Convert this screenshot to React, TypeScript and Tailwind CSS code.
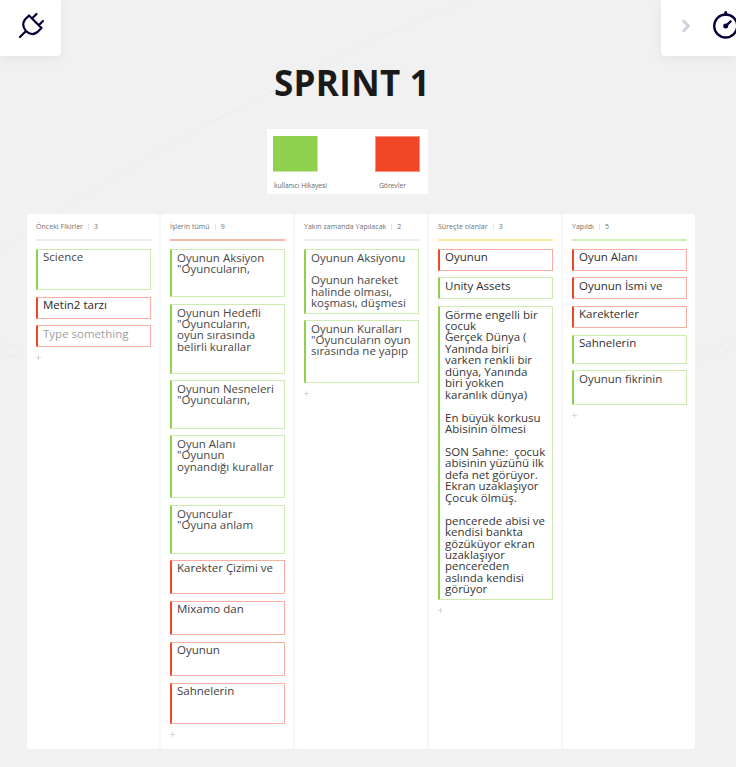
type Tone = 'green' | 'red';

interface CardData {
  tone: Tone;
  size: string;
  lines: string[];
  text?: string;
}

interface ColumnData {
  title: string;
  count: number;
  rule: string;
  cards: CardData[];
}

const columns: ColumnData[] = [
  {
    title: 'Önceki Fikirler',
    count: 3,
    rule: 'bg-[#ebebeb]',
    cards: [
      { tone: 'green', size: 'h-[41px] pt-px', lines: ['Science'] },
      { tone: 'red', size: 'mt-[7px] h-[22px] pt-px', lines: ['Metin2 tarzı'], text: 'text-[#1f1f1f]' },
      { tone: 'red', size: 'mt-[6px] h-[22px] pt-[1.5px]', lines: ['Type something'], text: 'text-[#a0a0a0]' },
    ],
  },
  {
    title: 'İşlerin tümü',
    count: 9,
    rule: 'bg-[#f9b8ab]',
    cards: [
      { tone: 'green', size: 'h-[48px] pt-[1.5px]', lines: ['Oyunun Aksiyon', '"Oyuncuların,'] },
      { tone: 'green', size: 'mt-[7px] h-[70px] pt-[1.5px]', lines: ['Oyunun Hedefli', '"Oyuncuların,', 'oyun sırasında', 'belirli kurallar'] },
      { tone: 'green', size: 'mt-[6px] h-[49px] pt-[1.5px]', lines: ['Oyunun Nesneleri', '"Oyuncuların,'] },
      { tone: 'green', size: 'mt-[6px] h-[63px] pt-[1.8px]', lines: ['Oyun Alanı', '"Oyunun', 'oynandığı kurallar'] },
      { tone: 'green', size: 'mt-[7px] h-[49px] pt-[1.5px]', lines: ['Oyuncular', '"Oyuna anlam'] },
      { tone: 'red', size: 'mt-[6px] h-[34px] pt-px', lines: ['Karekter Çizimi ve'], text: 'text-[#404040]' },
      { tone: 'red', size: 'mt-[7px] h-[34px] pt-px', lines: ['Mixamo dan'], text: 'text-[#404040]' },
      { tone: 'red', size: 'mt-[7px] h-[34px] pt-px', lines: ['Oyunun'], text: 'text-[#404040]' },
      { tone: 'red', size: 'mt-[7px] h-[41px] pt-px', lines: ['Sahnelerin'], text: 'text-[#404040]' },
    ],
  },
  {
    title: 'Yakın zamanda Yapılacak',
    count: 2,
    rule: 'bg-[#ebebeb]',
    cards: [
      { tone: 'green', size: 'h-[65px] pt-[1.5px]', lines: ['Oyunun Aksiyonu', '', 'Oyunun hareket', 'halinde olması,', 'koşması, düşmesi'] },
      { tone: 'green', size: 'mt-[6px] h-[63px] pt-[1.5px]', lines: ['Oyunun Kuralları', '"Oyuncuların oyun', 'sırasında ne yapıp'] },
    ],
  },
  {
    title: 'Süreçte olanlar',
    count: 3,
    rule: 'bg-[#fae9a0]',
    cards: [
      { tone: 'red', size: 'h-[22px] pt-px', lines: ['Oyunun'], text: 'text-[#303030]' },
      { tone: 'green', size: 'mt-[6px] h-[22px] pt-[1.5px]', lines: ['Unity Assets'], text: 'text-[#303030]' },
      {
        tone: 'green',
        size: 'mt-[7px] h-[294px] pt-[1.5px]',
        text: 'text-[#363636]',
        lines: [
          'Görme engelli bir', 'çocuk', 'Gerçek Dünya (', 'Yanında biri', 'varken renkli bir', 'dünya, Yanında',
          'biri yokken', 'karanlık dünya)', '', 'En büyük korkusu', 'Abisinin ölmesi', '', 'SON Sahne:  çocuk',
          'abisinin yüzünü ilk', 'defa net görüyor.', 'Ekran uzaklaşıyor', 'Çocuk ölmüş.', '', 'pencerede abisi ve',
          'kendisi bankta', 'gözüküyor ekran', 'uzaklaşıyor', 'pencereden', 'aslında kendisi', 'görüyor',
        ],
      },
    ],
  },
  {
    title: 'Yapıldı',
    count: 5,
    rule: 'bg-[#d3efb9]',
    cards: [
      { tone: 'red', size: 'h-[22px] pt-px', lines: ['Oyun Alanı'], text: 'text-[#303030]' },
      { tone: 'red', size: 'mt-[6px] h-[22px] pt-[1.5px]', lines: ['Oyunun İsmi ve'], text: 'text-[#303030]' },
      { tone: 'red', size: 'mt-[7px] h-[22px] pt-px', lines: ['Karekterler'], text: 'text-[#303030]' },
      { tone: 'green', size: 'mt-[7px] h-[29px] pt-px', lines: ['Sahnelerin'], text: 'text-[#303030]' },
      { tone: 'green', size: 'mt-[6px] h-[35px] pt-[1.5px]', lines: ['Oyunun fikrinin'], text: 'text-[#404040]' },
    ],
  },
];

const tones: Record<Tone, string> = {
  green: 'border-[#cdebb0] border-l-[#8fd14f]',
  red: 'border-[#f9aea1] border-l-[#f24726]',
};

function Card({ tone, size, lines, text = 'text-[#484848]' }: CardData) {
  return (
    <div className={`shrink-0 rounded-[1px] border border-l-2 pl-[5px] ${tones[tone]} ${size}`}>
      <div className={`whitespace-pre text-[11.5px] leading-[11.46px] ${text}`}>
        {lines.map((line, i) => (
          <div key={i} className="h-[11.46px]">{line}</div>
        ))}
      </div>
    </div>
  );
}

function Column({ title, count, rule, cards }: ColumnData) {
  return (
    <section className="flex h-full w-[132px] flex-col rounded-[3px] bg-white pl-[9px] pr-[8px] pt-[8px]">
      <header className="flex h-[10px] items-center text-[7px] leading-[10px] tracking-[0.03px] text-[#6f6f6f]">
        <span className="whitespace-nowrap">{title}</span>
        <span className="mx-[5px] h-[6px] w-px bg-[#e3e3e3]" />
        <span>{count}</span>
      </header>
      <div className={`mb-[8px] mt-[7px] h-[2px] shrink-0 ${rule}`} />
      {cards.map((card, i) => (
        <Card key={i} {...card} />
      ))}
      <svg className="mt-[8px] shrink-0" width="5" height="5" viewBox="0 0 5 5" stroke="#d0d0d0" strokeWidth="0.8">
        <path d="M2.5 0v5M0 2.5h5" />
      </svg>
    </section>
  );
}

export default function App() {
  return (
    <div className="relative h-[767px] w-[736px] overflow-hidden bg-[#f1f1f1] font-['Open_Sans',sans-serif]">
      <svg className="absolute inset-0" width="736" height="767" fill="none" stroke="#ececec">
        <path d="M0 250Q170 139 245 106Q320 65 365 43L470 0M0 343l27 5M0 354l27 4M695 353l41-13M695 361l41-13" />
      </svg>

      <div className="relative flex h-[56px] justify-between">
        <div className="h-[56px] w-[61px] rounded-br-[4px] bg-white shadow-[0_2px_12px_rgba(0,0,0,0.06)]">
          <svg className="ml-[18px] mt-[11px]" width="28" height="28" fill="none" stroke="#050038" strokeWidth="2.2" strokeLinecap="round" strokeLinejoin="round">
            <path d="M2 26l6-6M11 4.500l12.500 12.500-4 4q-6 4.500-11.500-1-5-6-1-11.500zM14.500 7l4-4M21 14l4-4" />
          </svg>
        </div>
        <div className="flex h-[56px] w-[75px] rounded-bl-[4px] bg-white shadow-[0_2px_12px_rgba(0,0,0,0.06)]">
          <svg width="75" height="56" fill="none" stroke="#050038" strokeLinecap="round" strokeLinejoin="round">
            <path d="M22.500 21l5 5-5 5" stroke="#d0cedb" strokeWidth="2.600" />
            <circle cx="64.700" cy="26" r="11.500" strokeWidth="2.300" />
            <path d="M64.700 12.500v2" strokeWidth="2.800" />
            <path d="M65 25.800l4.600-4.400" strokeWidth="2.400" />
            <circle cx="64.700" cy="26" r="2.500" fill="#050038" stroke="none" />
          </svg>
        </div>
      </div>

      <h1 className="relative ml-[274px] mt-[3px] h-[48px] whitespace-nowrap text-[35px] font-bold leading-[48px] tracking-[0.3px] text-[#1a1a1a]">SPRINT 1</h1>

      <div className="relative ml-[267px] mt-[22px] flex h-[65px] w-[161px] bg-white pt-[7px]">
        <div className="ml-[6px] w-[102px]">
          <div className="h-[36px] w-[45px] border-b border-r border-[#c7e8a7] bg-[#8fd14f]" />
          <div className="mt-[9px] whitespace-nowrap pl-px text-[6.7px] leading-[10px] text-[#666]">kullanıcı Hikayesi</div>
        </div>
        <div>
          <div className="h-[36px] w-[45px] border border-[#f79381] bg-[#f24726]" />
          <div className="mt-[9px] whitespace-nowrap pl-[4px] text-[6.7px] leading-[10px] text-[#666]">Görevler</div>
        </div>
      </div>

      <main className="relative ml-[27px] mt-[20px] flex h-[535px] w-[668px] gap-[2px] rounded-[3px] bg-[#f7f7f7]">
        {columns.map((column) => (
          <Column key={column.title} {...column} />
        ))}
      </main>
    </div>
  );
}
